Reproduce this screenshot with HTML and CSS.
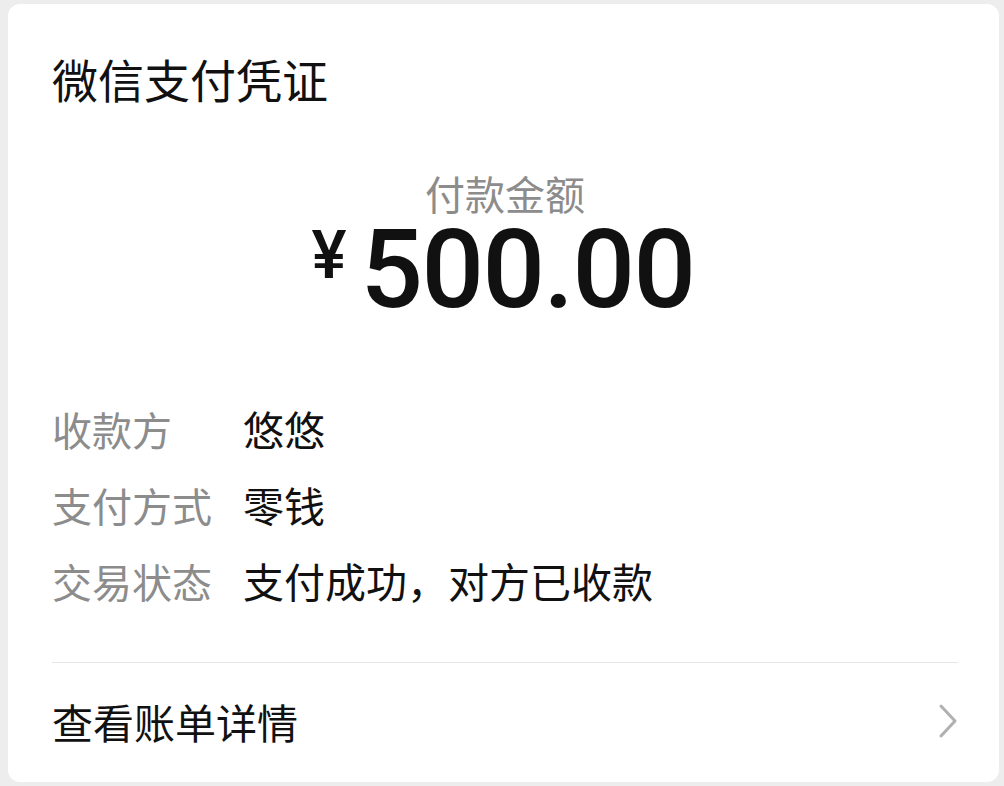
FILE: index.html
```html
<!doctype html>
<html lang="zh-CN">
<head>
    <meta charset="utf-8">
    <title>微信支付凭证</title>
    <link rel="stylesheet" href="styles.css">
</head>
<body>
    <div class="card">
        <div class="title">微信支付凭证</div>
        <div class="amount-block">
            <div class="amount-label">付款金额</div>
            <div class="amount">
                <span class="currency">¥</span>
                <span class="value">500.00</span>
            </div>
        </div>
        <div class="details">
            <div class="row">
                <span class="label">收款方</span>
                <span class="text">悠悠</span>
            </div>
            <div class="row">
                <span class="label">支付方式</span>
                <span class="text">零钱</span>
            </div>
            <div class="row">
                <span class="label">交易状态</span>
                <span class="text">支付成功，对方已收款</span>
            </div>
        </div>
        <div class="divider"></div>
        <div class="footer">
            <span class="footer-text">查看账单详情</span>
            <svg class="chevron" width="20" height="36" viewBox="0 0 20 36">
                <path d="M3 3 L17 18 L3 33" fill="none" stroke="#b0b0b0" stroke-width="3" stroke-linecap="round" stroke-linejoin="round"/>
            </svg>
        </div>
    </div>
</body>
</html>
```

FILE: styles.css
```css
html, body {
    margin: 0;
    padding: 0;
    background-color: #ededed;
}

body {
    font-family: "Noto Sans CJK SC", "Noto Sans", sans-serif;
    color: #111;
    height: 786px;
    overflow: hidden;
}

.card {
    margin: 4px 5px 0 8px;
    height: 778px;
    background-color: #fff;
    border-radius: 12px;
    padding: 0 41px 0 44px;
    box-sizing: border-box;
    display: flex;
    flex-direction: column;
}

.title {
    margin-top: 42px;
    font-size: 46px;
    line-height: 64px;
}

.amount-block {
    margin-top: 59px;
    display: flex;
    flex-direction: column;
    align-items: center;
}

.amount-label {
    font-size: 40px;
    line-height: 48px;
    color: #8c8c8c;
}

.amount {
    display: flex;
    align-items: flex-start;
    margin-top: 3px;
    padding-right: 4px;
}

.currency {
    font-family: Roboto, "Liberation Sans", sans-serif;
    font-weight: 500;
    font-size: 66px;
    line-height: 72px;
    margin-right: 14px;
}

.value {
    font-family: Roboto, "Liberation Sans", sans-serif;
    font-weight: 500;
    font-size: 110px;
    line-height: 100px;
    letter-spacing: -1.5px;
}

.details {
    margin-top: 71px;
    display: flex;
    flex-direction: column;
}

.row {
    display: flex;
    align-items: baseline;
    line-height: 75px;
}

.label {
    width: 191px;
    font-size: 40px;
    color: #8c8c8c;
}

.text {
    font-size: 41px;
}

.divider {
    margin-top: 43px;
    height: 1px;
    background-color: #e6e6e6;
}

.footer {
    flex: 1;
    display: flex;
    align-items: center;
    justify-content: space-between;
    padding-bottom: 4px;
}

.footer-text {
    font-size: 41px;
    line-height: 60px;
}

.chevron {
    display: block;
}
```
